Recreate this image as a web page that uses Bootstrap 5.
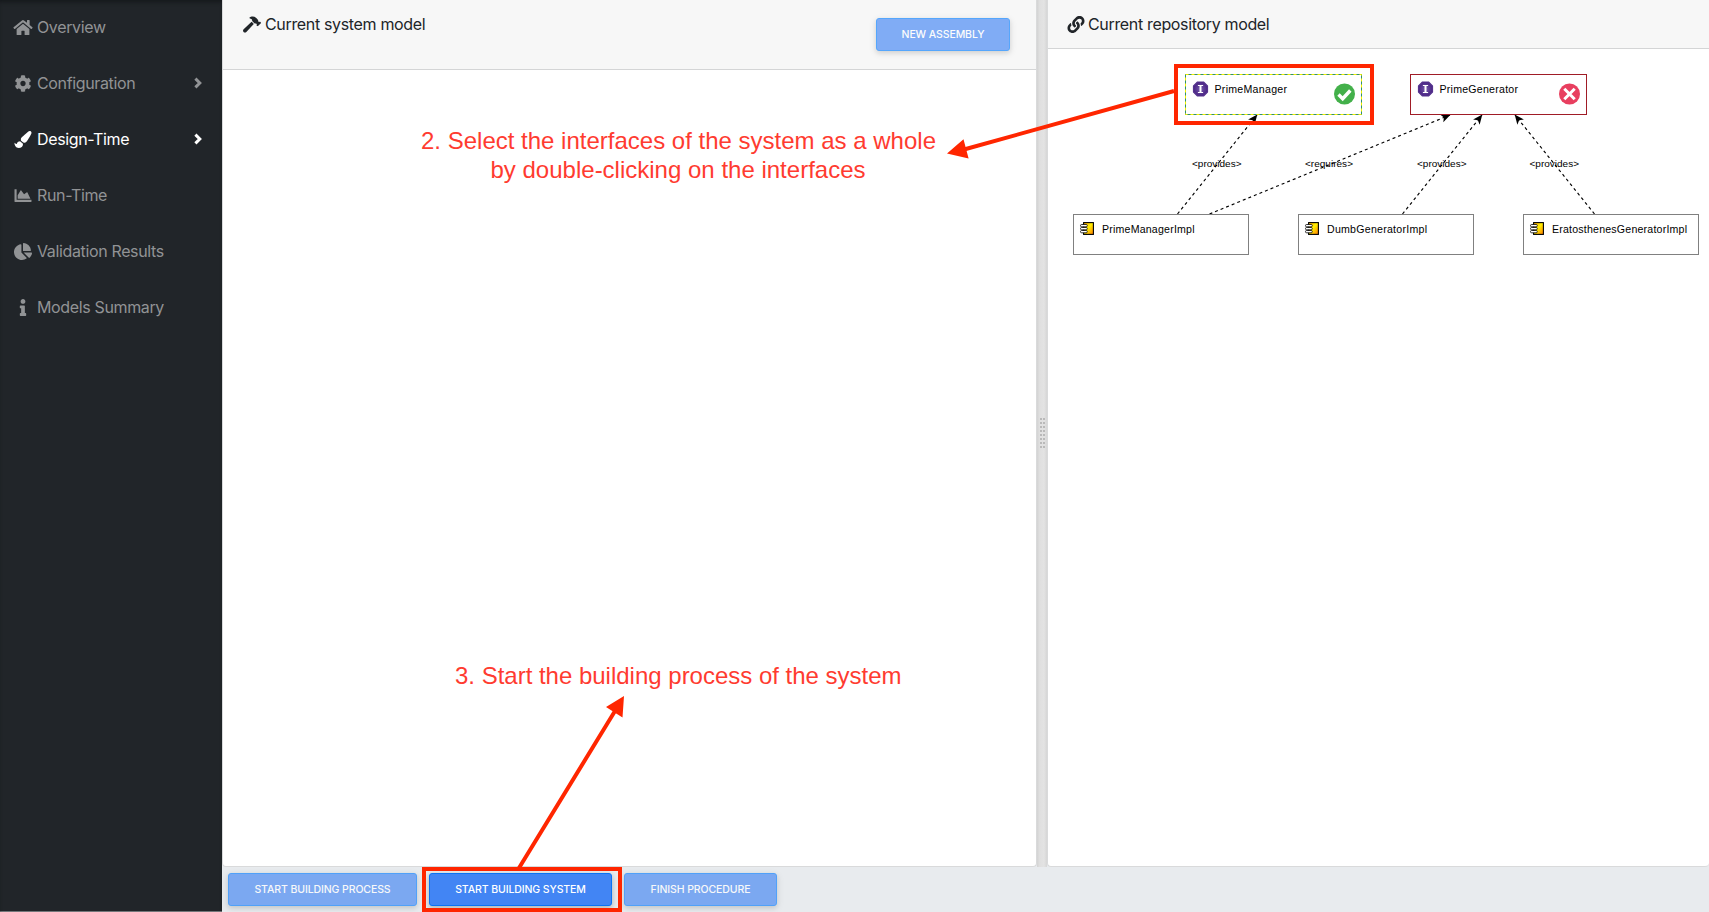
<!DOCTYPE html>
<html lang="en">
<head>
<meta charset="utf-8">
<title>System builder</title>
<meta name="viewport" content="width=device-width, initial-scale=1">
<link rel="stylesheet" href="https://cdn.jsdelivr.net/npm/bootstrap@5.3.0/dist/css/bootstrap.min.css">
<script src="https://cdn.jsdelivr.net/npm/bootstrap@5.3.0/dist/js/bootstrap.bundle.min.js"></script>
<style>
body{font-family:Inter,"Liberation Sans",sans-serif;background:#e8ebee;color:#212529;font-size:16px}
.side{width:222px;background:#212529;box-shadow:inset 0 4px 4px -2px #15181b,inset 0 -1px 0 #73777a}
.side .nav{margin-top:-1px}
.side .nav-link{height:56px;padding:0 15px 0 13px;color:#919395;letter-spacing:-.36px}
.side .nav-link.active{color:#fff}
.ico{width:20px;height:16px;margin-right:4px;fill:currentColor;flex:none}
.side .ico{height:17px}
.chev{width:8px;height:12px;margin-right:5px;fill:none;stroke:currentColor;stroke-width:3}
.workrow{height:867px}
.pane{border:1px solid #d9dadb;border-top:0;border-radius:0 0 4px 4px}
.pane-l{width:815px}
.pane .card-header{background:#f7f7f7;border-bottom:1px solid #d4d5d6;border-radius:0;padding:0 26px 0 20px}
.hd-l{height:70px}
.hd-r{height:49px}
.pane-r .card-header{padding-left:18px}
.ttl{height:48px;letter-spacing:-.34px}
.ttl .ico{height:17px;margin-right:2px}
.ttl .ico-hammer{width:18px;margin:0 4px 0 0}
.gutter{width:10px;background:linear-gradient(90deg,#d3d3d3,#dfdfdf 25%,#e3e3e3 70%,#d6d6d6)}
.grip{width:5px;height:30px;margin-top:-1px;background:
 repeating-linear-gradient(#0000 0 2px,#e1e1e1 2px 4px),
 linear-gradient(90deg,#b9b9b9 2px,#e1e1e1 2px 3px,#b9b9b9 3px)}
.act{height:33px;padding:0;font-size:10.5px;font-weight:500;letter-spacing:-.1px;line-height:31px;border-radius:3px;background:#4285f4;border:1px solid #0a73f5;color:#fff;box-shadow:0 2px 5px rgba(0,0,0,.18),0 2px 8px rgba(0,0,0,.09)}
.act:disabled{background:#4285f4;border-color:#007bff;color:#fff;opacity:.65}
.w-new{width:134px;margin-top:18px}
.w-proc{width:189px}
.w-sys{width:183px}
.w-fin{width:153px}
.foot{height:45px;padding:6px 0 0 6px;gap:12px}
.graph text{font-family:"Liberation Sans",Arial,sans-serif;font-size:10.6px;fill:#000}
.graph .lbl{font-size:9px}
.graph .wire{stroke:#000;stroke-width:1.15;stroke-dasharray:3 3;fill:none}
.notes{left:0;top:0;pointer-events:none;z-index:5}
.notes text{font-family:"Liberation Sans",Arial,sans-serif;font-size:24px;fill:#ff3b30}
</style>
</head>
<body class="vh-100 overflow-hidden position-relative d-flex">
<aside class="side flex-shrink-0 h-100">
 <nav class="nav flex-column">
  <a class="nav-link d-flex align-items-center"><svg class="ico" viewBox="0 0 576 512"><path d="M280.37 148.26L96 300.11V464a16 16 0 0 0 16 16l112.06-.29a16 16 0 0 0 15.92-16V368a16 16 0 0 1 16-16h64a16 16 0 0 1 16 16v95.64a16 16 0 0 0 16 16.05L464 480a16 16 0 0 0 16-16V300L295.67 148.26a12.19 12.19 0 0 0-15.3 0zM571.6 251.47L488 182.56V44.05a12 12 0 0 0-12-12h-56a12 12 0 0 0-12 12v72.61L318.47 43a48 48 0 0 0-61 0L4.34 251.47a12 12 0 0 0-1.6 16.9l25.5 31A12 12 0 0 0 45.15 301l235.22-193.74a12.19 12.19 0 0 1 15.3 0L530.9 301a12 12 0 0 0 16.9-1.6l25.5-31a12 12 0 0 0-1.7-16.93z"/></svg><span>Overview</span></a>
  <a class="nav-link d-flex align-items-center"><svg class="ico" viewBox="0 0 512 512"><path d="M487.4 315.7l-42.6-24.6c4.3-23.2 4.3-47 0-70.2l42.6-24.6c4.9-2.8 7.1-8.6 5.5-14-11.1-35.6-30-67.8-54.7-94.6-3.8-4.1-10-5.1-14.8-2.3L380.8 110c-17.9-15.4-38.5-27.3-60.8-35.1V25.8c0-5.6-3.9-10.5-9.4-11.7-36.7-8.2-74.3-7.8-109.2 0-5.5 1.2-9.4 6.1-9.4 11.7V75c-22.2 7.9-42.8 19.8-60.8 35.1L88.7 85.5c-4.9-2.8-11-1.9-14.8 2.3-24.7 26.7-43.6 58.9-54.7 94.6-1.7 5.4.6 11.2 5.5 14L67.3 221c-4.3 23.2-4.3 47 0 70.2l-42.6 24.6c-4.9 2.8-7.1 8.6-5.5 14 11.1 35.6 30 67.8 54.7 94.6 3.8 4.1 10 5.1 14.8 2.3l42.6-24.6c17.9 15.4 38.5 27.3 60.8 35.1v49.2c0 5.6 3.9 10.5 9.4 11.7 36.7 8.2 74.3 7.8 109.2 0 5.5-1.2 9.4-6.1 9.4-11.7v-49.2c22.2-7.9 42.8-19.8 60.8-35.1l42.6 24.6c4.9 2.8 11 1.9 14.8-2.3 24.7-26.7 43.6-58.9 54.7-94.6 1.5-5.5-.7-11.3-5.6-14.1zM256 336c-44.1 0-80-35.9-80-80s35.9-80 80-80 80 35.9 80 80-35.9 80-80 80z"/></svg><span class="flex-grow-1">Configuration</span><svg class="chev" viewBox="0 0 8 12"><path d="M1.4 1.6L5.8 6l-4.4 4.4"/></svg></a>
  <a class="nav-link active d-flex align-items-center"><svg class="ico" viewBox="0 0 512 512"><path d="M167.02 309.34c-40.12 2.58-76.53 17.86-97.19 72.3-2.35 6.21-8 9.98-14.59 9.98-11.11 0-45.46-27.67-55.25-34.35C0 439.62 37.93 512 128 512c75.86 0 128-43.77 128-120.19 0-3.11-.65-6.08-.97-9.13l-88.01-73.34zM457.89 0c-15.16 0-29.37 6.71-40.21 16.45C213.27 199.05 192 203.34 192 257.09c0 13.7 3.25 26.76 8.73 38.7l63.82 53.18c7.21 1.8 14.64 3.03 22.39 3.03 62.11 0 98.11-45.47 211.16-256.46 7.38-14.35 13.9-29.85 13.9-45.99C512 20.64 486 0 457.89 0z"/></svg><span class="flex-grow-1">Design-Time</span><svg class="chev" viewBox="0 0 8 12"><path d="M1.4 1.6L5.8 6l-4.4 4.4"/></svg></a>
  <a class="nav-link d-flex align-items-center"><svg class="ico" viewBox="0 0 512 512"><path d="M500 384c6.6 0 12 5.4 12 12v40c0 6.6-5.4 12-12 12H12c-6.6 0-12-5.4-12-12V76c0-6.6 5.4-12 12-12h40c6.6 0 12 5.4 12 12v308h436zM372.7 159.5L288 216l-85.3-113.7c-5.1-6.8-15.5-6.3-19.9 1L96 248v104h384l-89.9-187.8c-3.2-6.5-11.4-8.7-17.4-4.7z"/></svg><span>Run-Time</span></a>
  <a class="nav-link d-flex align-items-center"><svg class="ico" viewBox="0 0 544 512"><path d="M527.79 288H290.5l158.03 158.03c6.04 6.04 15.98 6.53 22.19.68 38.7-36.46 65.32-85.61 73.13-140.86 1.34-9.46-6.51-17.85-16.06-17.85zm-15.83-64.8C503.72 103.74 408.26 8.28 288.8.04 279.68-.59 272 7.1 272 16.24V240h223.77c9.14 0 16.82-7.68 16.19-16.8zM224 288V50.71c0-9.55-8.39-17.4-17.84-16.06C86.99 51.49-4.1 155.6.14 280.37 4.5 408.51 114.83 513.59 243.03 511.98c50.4-.63 96.97-16.87 135.26-44.03 7.9-5.6 8.42-17.23 1.57-24.08L224 288z"/></svg><span>Validation Results</span></a>
  <a class="nav-link d-flex align-items-center"><svg class="ico" viewBox="0 0 192 512"><path d="M20 424.229h20V279.771H20c-11.046 0-20-8.954-20-20V212c0-11.046 8.954-20 20-20h112c11.046 0 20 8.954 20 20v212.229h20c11.046 0 20 8.954 20 20V492c0 11.046-8.954 20-20 20H20c-11.046 0-20-8.954-20-20v-47.771c0-11.046 8.954-20 20-20zM96 0C56.235 0 24 32.235 24 72s32.235 72 72 72 72-32.235 72-72S135.764 0 96 0z"/></svg><span>Models Summary</span></a>
 </nav>
</aside>
<main class="flex-grow-1 d-flex flex-column">
 <div class="workrow d-flex">
  <section class="card pane pane-l flex-shrink-0">
   <div class="card-header hd-l d-flex justify-content-between align-items-start">
    <div class="ttl d-flex align-items-center"><svg class="ico ico-hammer" viewBox="0 0 576 512"><path d="M571.31 193.94l-22.63-22.63c-6.25-6.25-16.38-6.25-22.63 0l-11.31 11.31-28.9-28.9c5.63-21.31.36-44.9-16.35-61.61l-45.25-45.25c-62.48-62.48-163.79-62.48-226.28 0l90.51 45.25v18.75c0 16.97 6.74 33.25 18.75 45.25l49.14 49.14c16.71 16.71 40.3 21.98 61.61 16.35l28.9 28.9-11.31 11.31c-6.25 6.25-6.25 16.38 0 22.63l22.63 22.63c6.25 6.25 16.38 6.25 22.63 0l90.51-90.51c6.23-6.24 6.23-16.37-.02-22.62zm-286.72-15.2c-3.7-3.7-6.84-7.79-9.85-11.95L19.64 404.96c-25.57 23.88-26.26 64.19-1.53 88.93s65.05 24.05 88.92-1.53l238.13-255.07c-3.96-2.91-7.9-5.87-11.44-9.41l-49.13-49.14z"/></svg><span>Current system model</span></div>
    <button class="btn act w-new" disabled>NEW ASSEMBLY</button>
   </div>
  </section>
  <div class="gutter flex-shrink-0 d-flex align-items-center justify-content-center"><div class="grip"></div></div>
  <section class="card pane pane-r flex-grow-1 border-end-0">
   <div class="card-header hd-r">
    <div class="ttl d-flex align-items-center"><svg class="ico" viewBox="0 0 512 512"><path d="M326.612 185.391c59.747 59.809 58.927 155.698.36 214.59-.11.12-.24.25-.36.37l-67.2 67.2c-59.27 59.27-155.699 59.262-214.96 0-59.27-59.26-59.27-155.7 0-214.96l37.106-37.106c9.84-9.84 26.786-3.3 27.294 10.606.648 17.722 3.826 35.527 9.69 52.721 1.986 5.822.567 12.262-3.783 16.612l-13.087 13.087c-28.026 28.026-28.905 73.66-1.155 101.96 28.024 28.579 74.086 28.749 102.325.51l67.2-67.19c28.191-28.191 28.073-73.757 0-101.83-3.701-3.694-7.429-6.564-10.341-8.569a16.037 16.037 0 0 1-6.947-12.606c-.396-10.567 3.348-21.456 11.698-29.806l21.054-21.055c5.521-5.521 14.182-6.199 20.584-1.731a152.482 152.482 0 0 1 20.522 17.197zM467.547 44.449c-59.261-59.262-155.69-59.27-214.96 0l-67.2 67.2c-.12.12-.25.25-.36.37-58.566 58.892-59.387 154.781.36 214.59a152.454 152.454 0 0 0 20.521 17.196c6.402 4.468 15.064 3.789 20.584-1.731l21.054-21.055c8.35-8.35 12.094-19.239 11.698-29.806a16.037 16.037 0 0 0-6.947-12.606c-2.912-2.005-6.64-4.875-10.341-8.569-28.073-28.073-28.191-73.639 0-101.83l67.2-67.19c28.239-28.239 74.3-28.069 102.325.51 27.75 28.3 26.872 73.934-1.155 101.96l-13.087 13.087c-4.35 4.35-5.769 10.79-3.783 16.612 5.864 17.194 9.042 34.999 9.69 52.721.509 13.906 17.454 20.446 27.294 10.606l37.106-37.106c59.271-59.259 59.271-155.699.001-214.959z"/></svg><span>Current repository model</span></div>
   </div>
   <svg class="graph d-block" width="661" height="300" viewBox="1048 49 661 300">
    <defs>
     <marker id="tip" markerUnits="userSpaceOnUse" markerWidth="12" markerHeight="12" refX="9" refY="5" orient="auto"><path d="M9.5 5L0 .8 2.4 5 0 9.2z"/></marker>
     <linearGradient id="gold" x1="0" y1="0" x2="1" y2="1"><stop offset="0" stop-color="#ff9d00"/><stop offset=".45" stop-color="#fff200"/><stop offset="1" stop-color="#ff7a00"/></linearGradient>
     <radialGradient id="plum"><stop offset="0" stop-color="#7a62ab"/><stop offset=".5" stop-color="#5e3d97"/><stop offset="1" stop-color="#4a2584"/></radialGradient>
     <g id="iface"><path d="M-3-7H3L7-3V3L3 7H-3L-7 3V-3z" fill="url(#plum)" stroke="#55328d" stroke-width="1.2" stroke-linejoin="round"/><path d="M-2.6-3.500H2.6M-2.6 3.500H2.6" stroke="#fff" stroke-width="1.2"/><path d="M0-3.500V3.500" stroke="#fff" stroke-width="2"/></g>
     <g id="comp"><rect x="3.600" y=".6" width="9.800" height="11.800" fill="url(#gold)" stroke="#000" stroke-width="1.1"/><g fill="#fff" stroke="#000" stroke-width=".8"><rect x=".5" y="2.500" width="6.800" height="2.300" rx="1.100"/><rect x=".5" y="5.500" width="6.800" height="2.300" rx="1.100"/><rect x=".5" y="8.500" width="6.800" height="2.300" rx="1.100"/></g></g>
    </defs>
    <g class="wire">
     <path marker-end="url(#tip)" d="M1177.500 214L1257 115"/><path marker-end="url(#tip)" d="M1209.500 214L1450 115"/><path marker-end="url(#tip)" d="M1402.500 214L1482 115"/><path marker-end="url(#tip)" d="M1594.500 214L1515 115"/>
    </g>
    <g fill="#fff">
     <rect x="1185.500" y="74.500" width="176" height="40" stroke="#2f8f72"/><rect x="1185.500" y="74.500" width="176" height="40" fill="none" stroke="#f3f000" stroke-dasharray="3 3"/>
     <rect x="1410.500" y="74.500" width="176" height="40" stroke="#a01c26"/>
     <rect x="1073.500" y="214.500" width="175" height="40" stroke="#808080"/>
     <rect x="1298.500" y="214.500" width="175" height="40" stroke="#808080"/>
     <rect x="1523.500" y="214.500" width="175" height="40" stroke="#808080"/>
    </g>
    <use href="#iface" x="1200.500" y="89"/><use href="#iface" x="1425.500" y="89"/>
    <use href="#comp" x="1080" y="222"/><use href="#comp" x="1305" y="222"/><use href="#comp" x="1530" y="222"/>
    <circle cx="1344.500" cy="94" r="10.500" fill="#43b04a"/><path d="M1338.500 94.500l4.200 4.200 7.600-8.200" fill="none" stroke="#fff" stroke-width="3.400"/>
    <circle cx="1569.500" cy="94" r="10.500" fill="#e83f5f"/><path d="M1564.300 88.800l10.400 10.400M1574.700 88.800l-10.400 10.400" stroke="#fff" stroke-width="3"/>
    <text x="1214.500" y="93" textLength="72.500">PrimeManager</text><text x="1439.500" y="93" textLength="78.500">PrimeGenerator</text>
    <text x="1102" y="233" textLength="92.500">PrimeManagerImpl</text><text x="1327" y="233" textLength="100">DumbGeneratorImpl</text><text x="1552" y="233" textLength="135">EratosthenesGeneratorImpl</text>
    <g><text class="lbl" x="1192" y="166.500" textLength="49.500" lengthAdjust="spacingAndGlyphs">&lt;provides&gt;</text><text class="lbl" x="1305" y="166.500" textLength="48" lengthAdjust="spacingAndGlyphs">&lt;requires&gt;</text><text class="lbl" x="1417" y="166.500" textLength="49.500" lengthAdjust="spacingAndGlyphs">&lt;provides&gt;</text><text class="lbl" x="1529.500" y="166.500" textLength="49.500" lengthAdjust="spacingAndGlyphs">&lt;provides&gt;</text></g>
   </svg>
  </section>
 </div>
 <footer class="foot d-flex align-items-start">
  <button class="btn act w-proc" disabled>START BUILDING PROCESS</button>
  <button class="btn act w-sys">START BUILDING SYSTEM</button>
  <button class="btn act w-fin" disabled>FINISH PROCEDURE</button>
 </footer>
</main>
<!-- tutorial callouts over the workspace -->
<svg class="notes position-absolute" width="1709" height="912" viewBox="0 0 1709 912">
 <g fill="none" stroke="#ff2600" stroke-width="4"><rect x="1176" y="66" width="196" height="57"/><rect x="424" y="869" width="196" height="41"/><path d="M1174 91L964 149.500M519 868L615 711"/></g>
 <path d="M947 153.500L963.500 139.300 968.600 158.500zM624 696L606 707 622.500 717.500z" fill="#ff2600"/>
 <text x="421" y="148.500" textLength="515">2. Select the interfaces of the system as a whole</text>
 <text x="490.500" y="177.500" textLength="375">by double-clicking on the interfaces</text>
 <text x="455" y="684" textLength="446.500">3. Start the building process of the system</text>
</svg>
</body>
</html>
